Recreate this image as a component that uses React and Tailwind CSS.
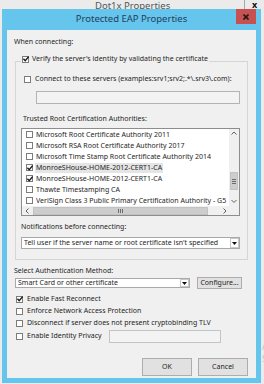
import React from 'react'

const certs = [
  { name: 'Microsoft Root Certificate Authority 2011', checked: false },
  { name: 'Microsoft RSA Root Certificate Authority 2017', checked: false },
  { name: 'Microsoft Time Stamp Root Certificate Authority 2014', checked: false },
  { name: 'MonroeSHouse-HOME-2012-CERT1-CA', checked: true, selected: true },
  { name: 'MonroeSHouse-HOME-2012-CERT1-CA', checked: true },
  { name: 'Thawte Timestamping CA', checked: false },
  { name: 'VeriSign Class 3 Public Primary Certification Authority - G5', checked: false },
]

function Check({ checked }) {
  return (
    <span className="w-[7px] h-[7px] shrink-0 border border-[#7c7c7c] bg-white flex items-center justify-center">
      {checked && (
        <svg width="6" height="6" viewBox="0 0 6 6" className="block overflow-visible">
          <path d="M0.4 2.8 L2.2 4.7 L5.6 0.6" fill="none" stroke="#1a1a1a" strokeWidth="1.4" />
        </svg>
      )}
    </span>
  )
}

function Chevron({ dir }) {
  const d = {
    up: 'M0.5 3.5 L3 1 L5.5 3.5',
    down: 'M0.5 1 L3 3.5 L5.5 1',
    left: 'M3.5 0.5 L1 3 L3.5 5.5',
    right: 'M1.5 0.5 L4 3 L1.5 5.5',
  }[dir]
  const vertical = dir === 'up' || dir === 'down'
  return (
    <svg width={vertical ? 6 : 5} height={vertical ? 5 : 6} viewBox={vertical ? '0 0 6 5' : '0 0 5 6'}>
      <path d={d} fill="none" stroke="#606060" strokeWidth="1" />
    </svg>
  )
}

function DropArrow() {
  return (
    <span className="w-[9px] h-full border border-[#c8c8c8] bg-white flex items-center justify-center">
      <svg width="5" height="3" viewBox="0 0 5 3">
        <path d="M0 0 H5 L2.5 3 Z" fill="#111" />
      </svg>
    </span>
  )
}

function Row({ checked, label, children, tall }) {
  return (
    <div className={`flex items-center gap-[4px] ${tall ? 'h-[14px]' : 'h-[12px]'}`}>
      <Check checked={checked} />
      {children ? (
        <>
          <span className="w-[78px] leading-[10px]">{label}</span>
          {children}
        </>
      ) : (
        <span className="leading-[10px]">{label}</span>
      )}
    </div>
  )
}

export default function App() {
  return (
    <div className="relative w-[264px] h-[384px] overflow-hidden bg-[#ebebeb] font-['Noto_Sans',sans-serif] text-[7px] text-[#1e1e1e]">
      {/* parent window behind */}
      <div className="flex h-[9px] overflow-hidden">
        <div className="flex-1 pl-[95px] pt-[2px] text-[9.5px] leading-[7px] text-[#555] overflow-hidden">Dot1x Properties</div>
        <div className="w-[20px] border-l border-[#a8a8a8] flex justify-center pt-[1px] text-[9px] leading-[8px] font-bold text-[#111]">x</div>
      </div>
      <div className="absolute left-[262px] top-[341px] w-[2px] overflow-hidden text-[9px] leading-[12px] text-[#c4c4c4]">
        <div>A</div>
        <div>S</div>
      </div>

      {/* dialog */}
      <div className="absolute left-[2px] top-[9px] w-[259px] h-[374px] bg-[#66c5ec] flex flex-col px-[5px] pb-[5px]">
        <div className="relative -mx-[5px] h-[21px] flex items-center justify-center text-[9.5px] text-[#213f5e]">
          Protected EAP Properties
          <div className="absolute right-[5px] top-0 w-[20px] h-[15px] bg-[#c75050] flex items-center justify-center">
            <svg width="6" height="6" viewBox="0 0 6 6">
              <path d="M0.5 0.5 L5.5 5.5 M5.5 0.5 L0.5 5.5" stroke="#1a1a1a" strokeWidth="1.6" />
            </svg>
          </div>
        </div>

        <div className="flex-1 bg-[#f0f0f0] flex flex-col">
          <div className="ml-[7px] mt-[7px] h-[10px] leading-[10px]">When connecting:</div>

          <fieldset className="ml-[8px] mt-[6px] w-[233px] border border-[#d5d5d5] pb-[10px]">
            <legend className="ml-[5px] px-[1px] h-[16px]">
              <div className="flex items-center gap-[3px] pt-[1px] h-[11px]">
                <Check checked />
                <span className="leading-[10px]">Verify the server's identity by validating the certificate</span>
              </div>
            </legend>

            <div className="ml-[8px] mt-[5px] h-[10px] flex items-center gap-[4px]">
              <Check />
              <span className="leading-[10px]">Connect to these servers (examples:srv1;srv2;.*\.srv3\.com):</span>
            </div>

            <div className="ml-[20px] mt-[7px] w-[204px] h-[13px] border border-[#b4b4b4] bg-[#f3f3f3]" />

            <div className="ml-[7px] mt-[10px] h-[10px] leading-[10px]">Trusted Root Certification Authorities:</div>

            <div className="ml-[5px] mt-[4px] w-[219px] h-[88px] border border-[#8d8d8d] bg-white flex flex-col">
              <div className="flex h-[77px]">
                <div className="flex-1 flex flex-col pl-[4px] overflow-hidden">
                  {certs.map((c, i) => (
                    <div key={i} className="h-[11px] flex items-center gap-[2px] whitespace-nowrap">
                      <Check checked={c.checked} />
                      <span className={`leading-[10px] px-[1px] ${c.selected ? 'bg-[#e5e5e5]' : ''}`}>{c.name}</span>
                    </div>
                  ))}
                </div>
                <div className="w-[10px] flex flex-col bg-[#f0f0f0]">
                  <div className="h-[9px] flex items-center justify-center">
                    <Chevron dir="up" />
                  </div>
                  <div className="flex-1 flex flex-col">
                    <div className="mt-[34px] h-[18px] mx-[1px] bg-[#cdcdcd] border border-[#c2c2c2] flex flex-col items-center justify-center gap-[1px]">
                      <div className="w-[4px] h-[1px] bg-[#6c6c6c]" />
                      <div className="w-[4px] h-[1px] bg-[#6c6c6c]" />
                      <div className="w-[4px] h-[1px] bg-[#6c6c6c]" />
                    </div>
                  </div>
                  <div className="h-[9px] flex items-center justify-center">
                    <Chevron dir="down" />
                  </div>
                </div>
              </div>
              <div className="flex h-[9px] bg-[#f0f0f0]">
                <div className="w-[10px] flex items-center justify-center">
                  <Chevron dir="left" />
                </div>
                <div className="flex-1 flex items-center">
                  <div className="ml-[1px] w-[175px] h-[8px] bg-[#cdcdcd] border border-[#c2c2c2] flex items-center justify-center gap-[1px]">
                    <div className="w-[1px] h-[4px] bg-[#6c6c6c]" />
                    <div className="w-[1px] h-[4px] bg-[#6c6c6c]" />
                    <div className="w-[1px] h-[4px] bg-[#6c6c6c]" />
                  </div>
                </div>
                <div className="w-[10px] flex items-center justify-center">
                  <Chevron dir="right" />
                </div>
                <div className="w-[10px] bg-[#f0f0f0]" />
              </div>
            </div>

            <div className="ml-[5px] mt-[6px] h-[10px] leading-[10px]">Notifications before connecting:</div>

            <div className="ml-[5px] mt-[5px] w-[219px] h-[12px] border border-[#a9a9a9] bg-white flex items-center">
              <span className="flex-1 pl-[2px] leading-[10px] whitespace-nowrap overflow-hidden">
                Tell user if the server name or root certificate isn't specified
              </span>
              <DropArrow />
            </div>
          </fieldset>

          <div className="ml-[7px] mt-[6px] h-[10px] leading-[10px]">Select Authentication Method:</div>

          <div className="ml-[8px] mt-[1px] h-[12px] flex items-center">
            <div className="w-[175px] h-[10px] border border-[#a9a9a9] bg-white flex items-center">
              <span className="flex-1 pl-[2px] leading-[8px]">Smart Card or other certificate</span>
              <DropArrow />
            </div>
            <div className="ml-[7px] w-[45px] h-[12px] border border-[#adadad] bg-[#e1e1e1] flex items-center justify-center leading-[10px]">
              Configure...
            </div>
          </div>

          <div className="ml-[9px] mt-[4px] flex flex-col">
            <Row checked label="Enable Fast Reconnect" />
            <Row label="Enforce Network Access Protection" />
            <Row label="Disconnect if server does not present cryptobinding TLV" />
            <Row label="Enable Identity Privacy" tall>
              <div className="w-[112px] h-[13px] border border-[#c4c4c4] bg-[#f3f3f3]" />
            </Row>
          </div>

          <div className="mt-[15px] pr-[8px] flex justify-end gap-[6px]">
            <div className="w-[50px] h-[18px] border border-[#adadad] bg-[#e1e1e1] flex items-center justify-center">OK</div>
            <div className="w-[50px] h-[18px] border border-[#adadad] bg-[#e1e1e1] flex items-center justify-center">Cancel</div>
          </div>
        </div>
      </div>
    </div>
  )
}
